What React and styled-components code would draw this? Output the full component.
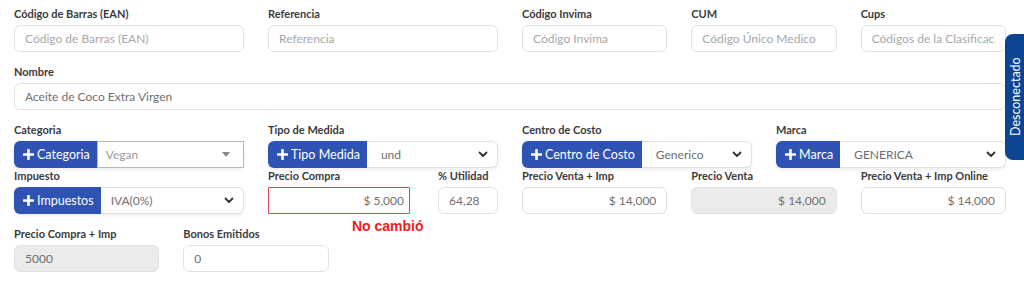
import React from "react";
import styled, { createGlobalStyle } from "styled-components";

const Global = createGlobalStyle`
  html, body { margin: 0; padding: 0; background: #fff; }
  body { font-family: Lato, "Open Sans", sans-serif; overflow: hidden; }
  * { box-sizing: border-box; }
`;

const Page = styled.div`
  position: relative;
  width: 1024px;
  height: 283px;
  padding-left: 2px;
  overflow: hidden;
`;

const Row = styled.div`
  display: flex;
  width: 1016px;
  margin-top: ${(p) => p.$mt}px;
`;

const Col = styled.div`
  width: ${(p) => (p.$span / 12) * 1016}px;
  padding: 0 12px;
  flex: none;
`;

const Field = styled.div`
  position: relative;
  display: flex;
  flex-direction: column;
  gap: 4px;
  flex: ${(p) => (p.$w ? "none" : "1")};
  width: ${(p) => (p.$w ? `${p.$w}px` : "auto")};
`;

const Label = styled.label`
  font-size: 11px;
  line-height: 14px;
  font-weight: 700;
  color: #3b3b3b;
  white-space: nowrap;
`;

const Input = styled.input`
  height: 27px;
  width: 100%;
  border: 1px solid ${(p) => (p.$error ? "#e0474c" : "#dfe1e5")};
  border-radius: ${(p) => (p.$error ? "1px" : "6px")};
  background: ${(p) => (p.disabled ? "#ebebeb" : "#fff")};
  padding: 0 ${(p) => (p.$error ? 5 : 10)}px 0 10px;
  font-family: inherit;
  font-size: 12px;
  color: #707070;
  text-align: ${(p) => (p.$right ? "right" : "left")};
  outline: none;
  &::placeholder { color: #a8a8a8; }
`;

const Split = styled.div`
  display: flex;
  gap: 28px;
`;

const Feedback = styled.div`
  position: absolute;
  top: 100%;
  left: 84px;
  margin-top: 4px;
  font-family: "Liberation Sans", Arial, sans-serif;
  font-weight: 700;
  font-size: 14px;
  line-height: 16px;
  color: #ee1c1c;
  white-space: nowrap;
`;

const Group = styled.div`
  display: flex;
  height: 27px;
  border-radius: 6px;
  box-shadow: 0 2px 4px rgba(0, 0, 0, 0.07);
`;

const AddButton = styled.button`
  display: flex;
  align-items: center;
  gap: 3px;
  height: 100%;
  padding: 0 7px 0 ${(p) => p.$pl || 9}px;
  border: none;
  border-radius: 6px 0 0 6px;
  background: #2f52b5;
  color: #fff;
  font-family: inherit;
  font-size: 12.5px;
  white-space: nowrap;
  flex: none;
`;

const SelectBox = styled.div`
  flex: 1;
  display: flex;
  align-items: center;
  justify-content: space-between;
  padding: 0 9px 0 ${(p) => p.$pl || 14}px;
  border: 1px solid ${(p) => (p.$square ? "#b9b9b9" : "#dfe1e5")};
  border-left: ${(p) => (p.$square ? "1px solid #b9b9b9" : "none")};
  border-radius: ${(p) => (p.$square ? "0" : "0 6px 6px 0")};
  background: #fff;
  font-size: 12px;
  color: ${(p) => (p.$square ? "#9a9a9a" : "#6e6e6e")};
`;

const Caret = styled.span`
  width: 0;
  height: 0;
  border-left: 4px solid transparent;
  border-right: 4px solid transparent;
  border-top: 5px solid #8a8a8a;
  margin-right: 4px;
`;

const Tab = styled.div`
  position: absolute;
  top: 34px;
  left: 1005px;
  width: 19px;
  height: 126px;
  padding-right: 3px;
  background: #0b4592;
  border-radius: 0 8px 8px 0;
  display: flex;
  align-items: center;
  justify-content: center;
  color: #fff;
  font-size: 12.5px;
  line-height: 14px;
  writing-mode: vertical-rl;
  transform: rotate(180deg);
`;

const Plus = () => (
  <svg width="11" height="11" viewBox="0 0 11 11">
    <path d="M5.5 1v9M1 5.5h9" stroke="#fff" strokeWidth="2.6" strokeLinecap="round" />
  </svg>
);

const Chevron = () => (
  <svg width="10" height="7" viewBox="0 0 10 7">
    <path d="M1.5 1.5L5 5l3.5-3.5" stroke="#333" strokeWidth="1.8" fill="none" strokeLinecap="round" strokeLinejoin="round" />
  </svg>
);

const TextField = ({ label, ...rest }) => (
  <Field>
    <Label>{label}</Label>
    <Input readOnly {...rest} />
  </Field>
);

const GroupField = ({ label, button, value, square, pl }) => (
  <Field>
    <Label>{label}</Label>
    <Group>
      <AddButton>
        <Plus />
        {button}
      </AddButton>
      <SelectBox $square={square} $pl={pl}>
        <span>{value}</span>
        {square ? <Caret /> : <Chevron />}
      </SelectBox>
    </Group>
  </Field>
);

export default function App() {
  return (
    <>
      <Global />
      <Page>
        <Row $mt={7}>
          <Col $span={3}><TextField label="Código de Barras (EAN)" placeholder="Código de Barras (EAN)" /></Col>
          <Col $span={3}><TextField label="Referencia" placeholder="Referencia" /></Col>
          <Col $span={2}><TextField label="Código Invima" placeholder="Código Invima" /></Col>
          <Col $span={2}><TextField label="CUM" placeholder="Código Único Medico" /></Col>
          <Col $span={2}><TextField label="Cups" placeholder="Códigos de la Clasificación" /></Col>
        </Row>
        <Row $mt={13}>
          <Col $span={12}><TextField label="Nombre" defaultValue="Aceite de Coco Extra Virgen" /></Col>
        </Row>
        <Row $mt={13}>
          <Col $span={3}><GroupField label="Categoria" button="Categoria" value="Vegan" square pl={8} /></Col>
          <Col $span={3}><GroupField label="Tipo de Medida" button="Tipo Medida" value="und" /></Col>
          <Col $span={3}><GroupField label="Centro de Costo" button="Centro de Costo" value="Generico" /></Col>
          <Col $span={3}><GroupField label="Marca" button="Marca" value="GENERICA" /></Col>
        </Row>
        <Row $mt={1}>
          <Col $span={3}><GroupField label="Impuesto" button="Impuestos" value="IVA(0%)" pl={10} /></Col>
          <Col $span={3}>
            <Split>
              <Field>
                <Label>Precio Compra</Label>
                <Input readOnly $error $right defaultValue="$ 5,000" />
                <Feedback>No cambió</Feedback>
              </Field>
              <Field $w={60}>
                <Label>% Utilidad</Label>
                <Input readOnly defaultValue="64,28" />
              </Field>
            </Split>
          </Col>
          <Col $span={2}><TextField label="Precio Venta + Imp" $right defaultValue="$ 14,000" /></Col>
          <Col $span={2}><TextField label="Precio Venta" $right disabled defaultValue="$ 14,000" /></Col>
          <Col $span={2}><TextField label="Precio Venta + Imp Online" $right defaultValue="$ 14,000" /></Col>
        </Row>
        <Row $mt={13}>
          <Col $span={2}><TextField label="Precio Compra + Imp" disabled defaultValue="5000" /></Col>
          <Col $span={2}><TextField label="Bonos Emitidos" defaultValue="0" /></Col>
        </Row>
        <Tab>Desconectado</Tab>
      </Page>
    </>
  );
}
